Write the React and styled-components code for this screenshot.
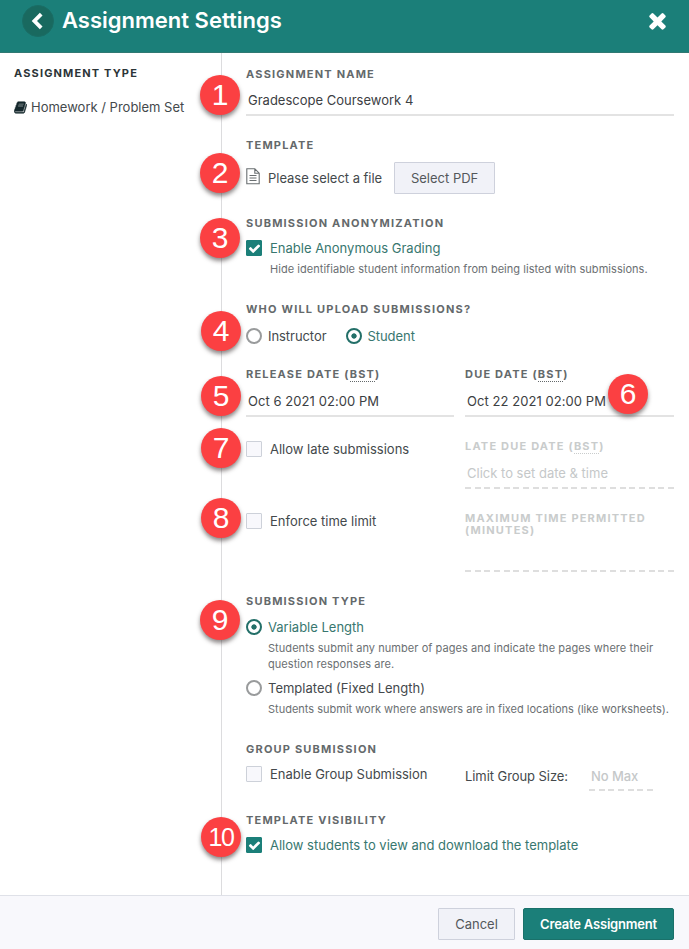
import React from "react";
import styled, { createGlobalStyle, css } from "styled-components";

const GlobalStyle = createGlobalStyle`
  *, *::before, *::after { box-sizing: border-box; }
  body { margin: 0; background: #fff; }
`;

const teal = "#1b7f79";

const Page = styled.div`
  display: flex;
  flex-direction: column;
  height: 949px;
  width: 689px;
  overflow: hidden;
  background: #fff;
  color: #44494c;
  font: 400 13px/16px Inter, "Liberation Sans", sans-serif;
  white-space: nowrap;
`;

const Header = styled.header`
  display: flex;
  align-items: flex-start;
  height: 53px;
  padding: 5px 22px;
  background: ${teal};
  border-bottom: 1px solid #307973;
  color: #fff;
`;

const BackButton = styled.button`
  display: flex;
  align-items: center;
  justify-content: center;
  width: 32px;
  height: 32px;
  padding: 0 2px 1px 0;
  border: 1px solid #1a6d65;
  border-radius: 50%;
  background: #19695f;
  color: #fff;
`;

const Title = styled.h1`
  flex: 1;
  margin: 1px 0 0 8px;
  font-size: 22px;
  line-height: 28px;
  font-weight: 600;
  letter-spacing: 0;
`;

const CloseButton = styled.button`
  display: flex;
  width: 25px;
  height: 25px;
  margin: 3px -3px 0 0;
  padding: 0;
  border: 0;
  background: none;
  color: #fff;
`;

const Icon = styled.svg`
  display: block;
  flex: none;
  width: ${(p) => p.$size}px;
  height: ${(p) => p.$size}px;
  fill: currentColor;
`;

const Body = styled.div`
  display: flex;
  flex: 1;
`;

const Sidebar = styled.aside`
  width: 222px;
  padding: 14px 0 0 14px;
  border-right: 1px solid #dcdcde;
`;

const SidebarTitle = styled.h2`
  margin: 0 0 20px;
  color: #2c3538;
  font-size: 11px;
  line-height: 12px;
  letter-spacing: 1.15px;
`;

const TypeRow = styled.div`
  display: flex;
  align-items: center;
  gap: 4px;
  svg { color: #15282d; stroke: currentColor; stroke-width: 70; }
`;

const Form = styled.main`
  flex: 1;
  padding: 15px 15px 0 24px;
`;

const Section = styled.section`
  position: relative;
  height: ${(p) => p.$height}px;
`;

const Columns = styled(Section)`
  display: grid;
  grid-template-columns: 208px 209px;
  column-gap: 11px;
  align-items: start;
`;

const Label = styled.div`
  color: ${(p) => (p.$muted ? "#c9cccc" : "#64696b")};
  font-size: 11px;
  line-height: 12px;
  font-weight: 700;
  letter-spacing: 1.2px;
`;

const Abbr = styled.abbr`
  display: inline-block;
  height: 14px;
  text-decoration: none;
  border-bottom: 1px dotted currentColor;
  margin-bottom: -2px;
`;

const Input = styled.div`
  height: ${(p) => p.$height || 36}px;
  padding: ${(p) => p.$top || 12}px 2px 0;
  border-bottom: 2px solid #e3e3e3;
  color: #3c4043;
  letter-spacing: ${(p) => p.$track || 0}px;
`;

const dashes = css`
  background: repeating-linear-gradient(90deg, #dedede 0 6px, transparent 6px 9.67px) left bottom / 100% 2px no-repeat;
`;

const DisabledInput = styled.div`
  height: ${(p) => p.$height}px;
  padding: ${(p) => p.$top || 0}px 2px 0;
  color: #c5c8c9;
  ${dashes}
`;

const FileRow = styled.div`
  display: flex;
  align-items: center;
  margin-top: 11px;
  height: 32px;
  letter-spacing: -0.03px;
  svg { margin: -3px 8px 0 0; }
`;

const Button = styled.button`
  height: 32px;
  width: ${(p) => p.$width}px;
  padding: 0;
  border: 1px solid ${(p) => (p.$primary ? "#1a716a" : "#ced1dc")};
  border-radius: ${(p) => (p.$primary ? 2 : 1)}px;
  background: ${(p) => (p.$primary ? teal : "#f1f2f8")};
  color: ${(p) => (p.$primary ? "#fff" : "#54585b")};
  font: ${(p) => (p.$primary ? 600 : 400)} 13px/16px Inter, sans-serif;
  letter-spacing: ${(p) => (p.$primary ? -0.2 : 0)}px;
`;

const SelectPdf = styled(Button)`
  margin-left: 12px;
`;

const Option = styled.div`
  display: flex;
  align-items: center;
  height: 16px;
  gap: ${(p) => p.$gap || 8}px;
  margin-top: ${(p) => p.$top || 0}px;
  color: ${(p) => (p.$on ? "#38776f" : "#44494c")};
`;

const RadioRow = styled.div`
  display: flex;
  gap: 19px;
  margin-top: 13px;
  letter-spacing: -0.06px;
`;

const RadioMark = styled.span`
  flex: none;
  width: 16px;
  height: 16px;
  border: 2px solid ${(p) => (p.$on ? "#236f68" : "#999b9c")};
  border-radius: 50%;
  background: ${(p) => (p.$on ? "radial-gradient(circle, #236f68 2.3px, #fff 3px)" : "#fff")};
`;

const Box = styled.span`
  display: flex;
  align-items: center;
  justify-content: center;
  flex: none;
  width: 16px;
  height: 16px;
  border: 1px solid ${(p) => (p.$on ? teal : "#cdd1d9")};
  border-radius: 1px;
  background: ${(p) => (p.$on ? teal : "#f8f8fc")};
  color: #fff;
`;

const Hint = styled.div`
  margin: ${(p) => p.$top}px 0 0 ${(p) => p.$indent}px;
  color: #6b6f72;
  font-size: 11px;
  line-height: 16px;
  letter-spacing: ${(p) => p.$track ?? 0.04}px;
`;

const GroupSize = styled.div`
  display: flex;
  align-items: flex-start;
  margin-top: 25px;
  letter-spacing: -0.07px;
`;

const SizeInput = styled(DisabledInput)`
  width: 65px;
  margin-left: 21px;
  font-weight: 500;
`;

const Badge = styled.span`
  position: absolute;
  left: ${(p) => p.$x - 266}px;
  top: ${(p) => p.$top}px;
  width: 40px;
  height: 40px;
  border-radius: 50%;
  background: #fb4042;
  box-shadow: 0 3px 4px rgba(50, 40, 40, 0.55);
  color: #fff;
  font: ${(p) => (p.$small ? 25 : 30)}px/40px "Liberation Sans", Arial, sans-serif;
  letter-spacing: ${(p) => (p.$small ? -1.5 : 0)}px;
  text-align: center;
`;

const Footer = styled.footer`
  display: flex;
  justify-content: flex-end;
  gap: 8px;
  height: 54px;
  padding: 12px 15px 0;
  border-top: 1px solid #dfe1e8;
  background: #f8f8fc;
`;

const Book = () => (
  <Icon $size={13} viewBox="32 64 1728 1664">
    <path d="M1703 478q40 57 18 129l-275 906q-19 64-76.500 107.500t-122.500 43.500h-923q-77 0-148.500-53.500t-99.500-131.500q-24-67-2-127 0-4 3-27t4-37q1-8-3-21.500t-3-19.500q2-11 8-21t16.500-23.500 16.500-23.500q23-38 45-91.500t30-91.500q3-10 .5-30t-.5-28q3-11 17-28t17-23q21-36 42-92t25-90q1-9-2.500-32t.5-28q4-13 22-30.500t22-22.500q19-26 42.500-84.500t27.500-96.500q1-8-3-25.500t-2-26.500q2-8 9-18t18-23 17-21q8-12 16.500-30.500t15-35 16-36 19.500-32 26.500-23.500 36-11.500 47.500 5.500l-1 3q38-9 51-9h761q74 0 114 56t18 130l-274 906q-36 119-71.500 153.500t-128.500 34.500h-869q-27 0-38 15-11 16-1 43 24 70 144 70h923q29 0 56-15.500t35-41.500l300-987q7-22 5-57 38 15 59 43zm-1064 2q-4 13 2 22.500t20 9.500h608q13 0 25.500-9.500t16.500-22.500l21-64q4-13-2-22.500t-20-9.500h-608q-13 0-25.500 9.500t-16.500 22.500zm-83 256q-4 13 2 22.500t20 9.500h608q13 0 25.500-9.500t16.500-22.500l21-64q4-13-2-22.500t-20-9.500h-608q-13 0-25.500 9.500t-16.500 22.500z" />
  </Icon>
);

const Chevron = () => (
  <svg width="20" height="20" viewBox="0 0 20 20" fill="none" stroke="#fff" strokeWidth="3.8">
    <path d="M14.2 3.2L7.4 10L14.2 16.8" />
  </svg>
);

const Times = () => (
  <Icon $size={25} viewBox="0 0 1792 1792">
    <path d="M1490 1322q0 40-28 68l-136 136q-28 28-68 28t-68-28l-294-294-294 294q-28 28-68 28t-68-28l-136-136q-28-28-28-68t28-68l294-294-294-294q-28-28-28-68t28-68l136-136q28-28 68-28t68 28l294 294 294-294q28-28 68-28t68 28l136 136q28 28 28 68t-28 68l-294 294 294 294q28 28 28 68z" />
  </Icon>
);

const FileIcon = () => (
  <svg width="14" height="17" viewBox="0 0 14 17" fill="none" stroke="#6a6f71" strokeWidth="1.1">
    <path d="M.8.8H8.8L13.2 5.2V15.8H.8ZM8.8.8V5.2H13.2M3.5 7.5H10.5M3.5 10H10.5M3.5 12.5H10.5" />
  </svg>
);

const Checkbox = ({ on, children, top }) => (
  <Option $on={on} $top={top}>
    <Box $on={on}>
      {on && (
        <Icon $size={13} viewBox="0 0 1792 1792">
          <path d="M1671 566q0 40-28 68l-724 724-136 136q-28 28-68 28t-68-28l-136-136-362-362q-28-28-28-68t28-68l136-136q28-28 68-28t68 28l294 295 656-657q28-28 68-28t68 28l136 136q28 28 28 68z" />
        </Icon>
      )}
    </Box>
    {children}
  </Option>
);

const Radio = ({ on, children, top }) => (
  <Option $on={on} $top={top} $gap={6}>
    <RadioMark $on={on} />
    {children}
  </Option>
);

const Bst = () => <>(<Abbr>BST</Abbr>)</>;

export default function App() {
  return (
    <Page>
      <GlobalStyle />
      <Header>
        <BackButton aria-label="Back"><Chevron /></BackButton>
        <Title>Assignment Settings</Title>
        <CloseButton aria-label="Close"><Times /></CloseButton>
      </Header>
      <Body>
        <Sidebar>
          <SidebarTitle>ASSIGNMENT TYPE</SidebarTitle>
          <TypeRow><Book />Homework / Problem Set</TypeRow>
        </Sidebar>
        <Form>
          <Section $height={71}>
            <Badge $x={220} $top={7}>1</Badge>
            <Label>ASSIGNMENT NAME</Label>
            <Input>Gradescope Coursework 4</Input>
          </Section>
          <Section $height={78}>
            <Badge $x={220} $top={14}>2</Badge>
            <Label>TEMPLATE</Label>
            <FileRow>
              <FileIcon />
              Please select a file
              <SelectPdf $width={101}>Select PDF</SelectPdf>
            </FileRow>
          </Section>
          <Section $height={86}>
            <Badge $x={220} $top={1}>3</Badge>
            <Label>SUBMISSION ANONYMIZATION</Label>
            <Checkbox on top={11}>Enable Anonymous Grading</Checkbox>
            <Hint $top={5} $indent={24}>Hide identifiable student information from being listed with submissions.</Hint>
          </Section>
          <Section $height={65}>
            <Badge $x={221} $top={8}>4</Badge>
            <Label>WHO WILL UPLOAD SUBMISSIONS?</Label>
            <RadioRow>
              <Radio>Instructor</Radio>
              <Radio on>Student</Radio>
            </RadioRow>
          </Section>
          <Columns $height={72}>
            <Badge $x={221} $top={8}>5</Badge>
            <div>
              <Label>RELEASE DATE <Bst /></Label>
              <Input $height={37} $top={13} $track={0.06}>Oct 6 2021 02:00 PM</Input>
            </div>
            <div>
              <Label>DUE DATE <Bst /></Label>
              <Input $height={37} $top={13} $track={0.06}>Oct 22 2021 02:00 PM</Input>
            </div>
            <Badge $x={628} $top={6}>6</Badge>
          </Columns>
          <Columns $height={72}>
            <Badge $x={221} $top={-12}>7</Badge>
            <Checkbox top={1}>Allow late submissions</Checkbox>
            <div>
              <Label $muted>LATE DUE DATE <Bst /></Label>
              <DisabledInput $height={37} $top={13}>Click to set date &amp; time</DisabledInput>
            </div>
          </Columns>
          <Columns $height={83}>
            <Badge $x={221} $top={-14}>8</Badge>
            <Checkbox top={1}>Enforce time limit</Checkbox>
            <div>
              <Label $muted>MAXIMUM TIME PERMITTED</Label>
              <Label $muted>(MINUTES)</Label>
              <DisabledInput $height={36} />
            </div>
          </Columns>
          <Section $height={148}>
            <Badge $x={220} $top={5}>9</Badge>
            <Label>SUBMISSION TYPE</Label>
            <Radio on top={12}>Variable Length</Radio>
            <Hint $top={5} $indent={22} $track={0.06}>
              Students submit any number of pages and indicate the pages where their<br />question responses are.
            </Hint>
            <Radio top={8}>Templated (Fixed Length)</Radio>
            <Hint $top={5} $indent={22} $track={0}>Students submit work where answers are in fixed locations (like worksheets).</Hint>
          </Section>
          <Columns $height={71}>
            <div>
              <Label>GROUP SUBMISSION</Label>
              <Checkbox top={11}>Enable Group Submission</Checkbox>
            </div>
            <GroupSize>
              <span>Limit Group Size:</span>
              <SizeInput $height={23}>No Max</SizeInput>
            </GroupSize>
          </Columns>
          <Section $height={60}>
            <Badge $x={221} $top={3} $small>10</Badge>
            <Label>TEMPLATE VISIBILITY</Label>
            <Checkbox on top={11}>Allow students to view and download the template</Checkbox>
          </Section>
        </Form>
      </Body>
      <Footer>
        <Button $width={77}>Cancel</Button>
        <Button $primary $width={151}>Create Assignment</Button>
      </Footer>
    </Page>
  );
}
